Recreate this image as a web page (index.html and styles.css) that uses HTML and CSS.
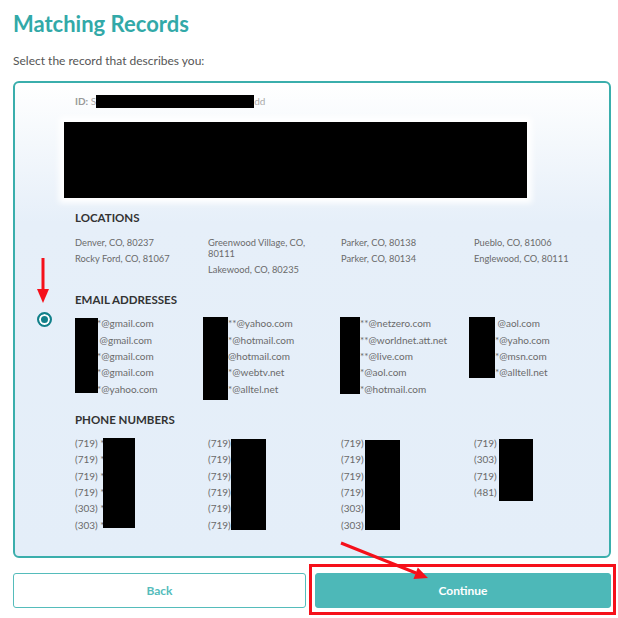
FILE: index.html
```html
<!DOCTYPE html>
<html lang="en">
<head>
<meta charset="utf-8">
<title>Matching Records</title>
<link rel="stylesheet" href="styles.css">
</head>
<body>
<div class="page">
  <h1 class="title">Matching Records</h1>
  <p class="subtitle">Select the record that describes you:</p>

  <div class="card">
    <div class="radio-col"><span class="radio"></span></div>
    <div class="record">
      <div class="id-row"><span class="id-label">ID:</span> <span class="id-val">S<span class="redact-inline"></span>dd</span></div>
      <div class="name-block"></div>

      <section class="section">
        <h2 class="section-title">LOCATIONS</h2>
        <div class="grid">
          <ul class="list loc"><li>Denver, CO, 80237</li><li>Rocky Ford, CO, 81067</li></ul>
          <ul class="list loc"><li>Greenwood Village, CO, 80111</li><li>Lakewood, CO, 80235</li></ul>
          <ul class="list loc"><li>Parker, CO, 80138</li><li>Parker, CO, 80134</li></ul>
          <ul class="list loc"><li>Pueblo, CO, 81006</li><li>Englewood, CO, 80111</li></ul>
        </div>
      </section>

      <section class="section">
        <h2 class="section-title">EMAIL ADDRESSES</h2>
        <div class="grid">
          <ul class="list masked e1"><li>*@gmail.com</li><li>&nbsp;@gmail.com</li><li>*@gmail.com</li><li>*@gmail.com</li><li>*@yahoo.com</li><span class="redact re1"></span></ul>
          <ul class="list masked e2"><li>**@yahoo.com</li><li>*@hotmail.com</li><li>@hotmail.com</li><li>*@webtv.net</li><li>*@alltel.net</li><span class="redact re2"></span></ul>
          <ul class="list masked e3"><li>**@netzero.com</li><li>**@worldnet.att.net</li><li>**@live.com</li><li>*@aol.com</li><li>*@hotmail.com</li><span class="redact re3"></span></ul>
          <ul class="list masked e4"><li>&nbsp;@aol.com</li><li>*@yaho.com</li><li>*@msn.com</li><li>*@alltell.net</li><span class="redact re4"></span></ul>
        </div>
      </section>

      <section class="section">
        <h2 class="section-title">PHONE NUMBERS</h2>
        <div class="grid">
          <ul class="list masked"><li>(719) *</li><li>(719) *</li><li>(719) *</li><li>(719) *</li><li>(303) *</li><li>(303) *</li><span class="redact rp1"></span></ul>
          <ul class="list masked"><li>(719)</li><li>(719)</li><li>(719)</li><li>(719)</li><li>(719)</li><li>(719)</li><span class="redact rp2"></span></ul>
          <ul class="list masked"><li>(719)</li><li>(719)</li><li>(719)</li><li>(719)</li><li>(303)</li><li>(303)</li><span class="redact rp3"></span></ul>
          <ul class="list masked"><li>(719) *</li><li>(303) *</li><li>(719) *</li><li>(481) *</li><span class="redact rp4"></span></ul>
        </div>
      </section>
    </div>
  </div>

  <div class="actions">
    <button class="btn btn-back">Back</button>
    <button class="btn btn-continue">Continue</button>
  </div>

  <div class="highlight"></div>
  <svg class="annotations" width="618" height="618" viewBox="0 0 618 618">
    <line x1="43" y1="258" x2="43" y2="291" stroke="#f5101a" stroke-width="3"/>
    <polygon points="37,289 49,289 43,303" fill="#f5101a"/>
    <line x1="341" y1="543" x2="416" y2="573" stroke="#f5101a" stroke-width="3"/>
    <polygon points="428,578 413.5,579 417.8,567.5" fill="#f5101a"/>
  </svg>
</div>
</body>
</html>
```

FILE: styles.css
```css
* { box-sizing: border-box; }
html, body { margin: 0; padding: 0; background: #fff; }
body { font-family: Lato, "Open Sans", sans-serif; }

.page {
  position: relative;
  width: 618px;
  height: 618px;
  padding: 9px 7px 0 13px;
  overflow: hidden;
}

.title {
  margin: 0;
  font-size: 22px;
  line-height: 30px;
  font-weight: 700;
  color: #32a9a8;
}

.subtitle {
  margin: 14px 0 0;
  font-size: 12px;
  line-height: 16px;
  color: #555;
}

.card {
  margin-top: 12px;
  display: flex;
  align-items: center;
  border: 2px solid #3aaeac;
  border-radius: 6px;
  background: linear-gradient(to bottom, #ffffff 0px, #f4f8fc 60px, #e6eff9 140px, #e4eef9 100%);
  height: 477px;
}

.radio-col {
  width: 60px;
  flex: none;
  display: flex;
  padding-left: 22px;
}

.radio {
  display: block;
  width: 15px;
  height: 15px;
  border-radius: 50%;
  border: 2px solid #12808a;
  background: #12808a;
  box-shadow: inset 0 0 0 2px #fff;
}

.record {
  flex: 1;
  align-self: stretch;
  padding-top: 12px;
}

.id-row {
  font-size: 10px;
  line-height: 12px;
  color: #aaa;
}
.id-label { font-weight: 700; color: #999; }
.redact-inline {
  display: inline-block;
  width: 158px;
  height: 13px;
  background: #000;
  vertical-align: -3px;
}

.name-block {
  margin: 14px 0 0 -11px;
  width: 463px;
  height: 76px;
  background: #000;
  box-shadow: 0 0 6px 5px #fff;
}

.section { margin-top: 12.8px; }
.name-block + .section { margin-top: 13px; }

.section-title {
  margin: 0 0 11.5px;
  font-size: 11.5px;
  line-height: 14px;
  font-weight: 700;
  color: #333;
}

.grid {
  display: grid;
  grid-template-columns: repeat(4, 110px);
  column-gap: 23px;
}

.list {
  margin: 0;
  padding: 0;
  list-style: none;
  position: relative;
}
.list li {
  font-size: 10px;
  line-height: 11px;
  margin-bottom: 5.3px;
  color: #6a6a6a;
}
.loc li { font-size: 9.3px; }

.e1 li { padding-left: 22px; }
.e2 li { padding-left: 20px; }
.e3 li { padding-left: 19px; }
.e4 li { padding-left: 21px; }

.redact { position: absolute; background: #000; display: block; }
.re1 { left: 0; top: -0.5px; width: 23px; height: 75px; }
.re2 { left: -5px; top: -1.5px; width: 25px; height: 83px; }
.re3 { left: -1px; top: -1.5px; width: 20px; height: 77px; }
.re4 { left: -5px; top: -1.5px; width: 26px; height: 61px; }
.rp1 { left: 28px; top: -0.5px; width: 32px; height: 90px; }
.rp2 { left: 23px; top: 0.5px; width: 35px; height: 91px; }
.rp3 { left: 24px; top: 1.5px; width: 35px; height: 90px; }
.rp4 { left: 25px; top: 0.5px; width: 34px; height: 62px; }

.actions {
  margin-top: 15px;
  display: flex;
  gap: 9px;
}

.btn {
  height: 35px;
  border-radius: 3px;
  font-family: inherit;
  font-size: 12px;
  font-weight: 700;
  cursor: pointer;
}
.btn-back {
  flex: none;
  width: 293px;
  background: #fff;
  border: 1.5px solid #55bcbb;
  color: #55bcbb;
}
.btn-continue {
  flex: 1;
  background: #4db8b8;
  border: 1px solid #4db8b8;
  color: #fff;
}

.highlight {
  position: absolute;
  left: 309px;
  top: 564px;
  width: 307px;
  height: 51px;
  border: 3px solid #f5101a;
  pointer-events: none;
}

.annotations {
  position: absolute;
  left: 0;
  top: 0;
  pointer-events: none;
}
```
